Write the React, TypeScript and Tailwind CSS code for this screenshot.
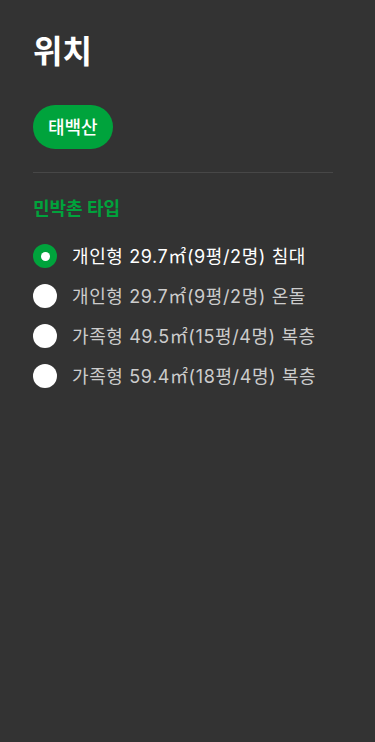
const options = [
  '개인형 29.7㎡(9평/2명) 침대',
  '개인형 29.7㎡(9평/2명) 온돌',
  '가족형 49.5㎡(15평/4명) 복층',
  '가족형 59.4㎡(18평/4명) 복층',
]

export default function App() {
  const selected = 0
  return (
    <div className="min-h-[742px] w-full bg-[#333333] px-[33px] pt-[30px] font-['Inter','Noto_Sans_CJK_KR',sans-serif]">
      <h1 className="text-[32px] font-bold leading-[44px] text-white">위치</h1>
      <div className="mt-[31px] flex">
        <button className="h-[44px] rounded-full bg-[#00a33c] px-[15px] text-[18px] font-medium text-white">태백산</button>
      </div>
      <div className="mt-[23px] h-px w-[300px] bg-[#474747]" />
      <h2 className="mt-[23px] text-[18px] font-bold leading-[26px] text-[#00a33c]">민박촌 타입</h2>
      <div className="mt-[14px] flex flex-col">
        {options.map((o, i) => (
          <label key={o} className="flex h-[40px] items-center gap-[15px]">
            {i === selected ? (
              <span className="flex h-[24px] w-[24px] items-center justify-center rounded-full bg-[#00a33c]">
                <span className="h-[9px] w-[9px] rounded-full bg-white" />
              </span>
            ) : (
              <span className="h-[24px] w-[24px] rounded-full bg-white" />
            )}
            <span className={`text-[18px] tracking-[0.6px] ${i === selected ? 'text-white' : 'text-[#cccccc]'}`}>{o}</span>
          </label>
        ))}
      </div>
    </div>
  )
}
